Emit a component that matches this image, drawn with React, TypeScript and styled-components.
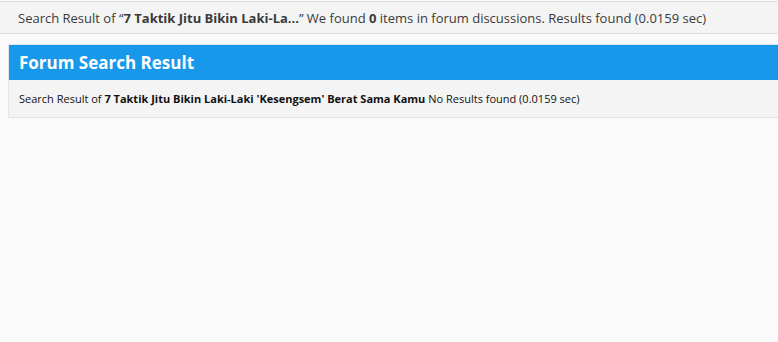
import React from 'react';
import styled, { createGlobalStyle } from 'styled-components';

const GlobalStyle = createGlobalStyle`
  html, body {
    margin: 0;
    padding: 0;
    background: #fafafa;
  }
  body {
    font-family: "Open Sans", "Noto Sans", sans-serif;
    color: #333;
  }
`;

// Summary strip across the top
const SummaryBar = styled.div`
  margin-top: 1px;
  height: 31px;
  display: flex;
  align-items: center;
  padding: 0 18px;
  background: #f4f4f4;
  border-top: 1px solid #dedede;
  border-bottom: 1px solid #dedede;
  font-size: 13px;
  color: #3a3a3a;
  white-space: nowrap;
`;

// Result panel; its right edge sits past the window, so no right border shows
const Panel = styled.section`
  margin: 10px 0 0 8px;
  border: 1px solid #e4e4e4;
  border-right: none;
  background: #f4f4f4;
`;

const PanelHeader = styled.h2`
  margin: 0;
  height: 35px;
  display: flex;
  align-items: center;
  padding: 0 10px;
  background: #1798eb;
  color: #fff;
  font-size: 17px;
  font-weight: 700;
`;

const PanelBody = styled.div`
  height: 37px;
  display: flex;
  align-items: center;
  padding: 0 10px;
  font-size: 11px;
  color: #111;
  white-space: nowrap;
`;

const App = (): JSX.Element => (
  <>
    <GlobalStyle />
    <SummaryBar>
      Search Result of &ldquo;<b>7 Taktik Jitu Bikin Laki-La...</b>&rdquo; We found&nbsp;<b>0</b>&nbsp;items in forum discussions. Results found (0.0159 sec)
    </SummaryBar>
    <Panel>
      <PanelHeader>Forum Search Result</PanelHeader>
      <PanelBody>
        Search Result of&nbsp;<b>7 Taktik Jitu Bikin Laki-Laki 'Kesengsem' Berat Sama Kamu</b>&nbsp;No Results found (0.0159 sec)
      </PanelBody>
    </Panel>
  </>
);

export default App;
